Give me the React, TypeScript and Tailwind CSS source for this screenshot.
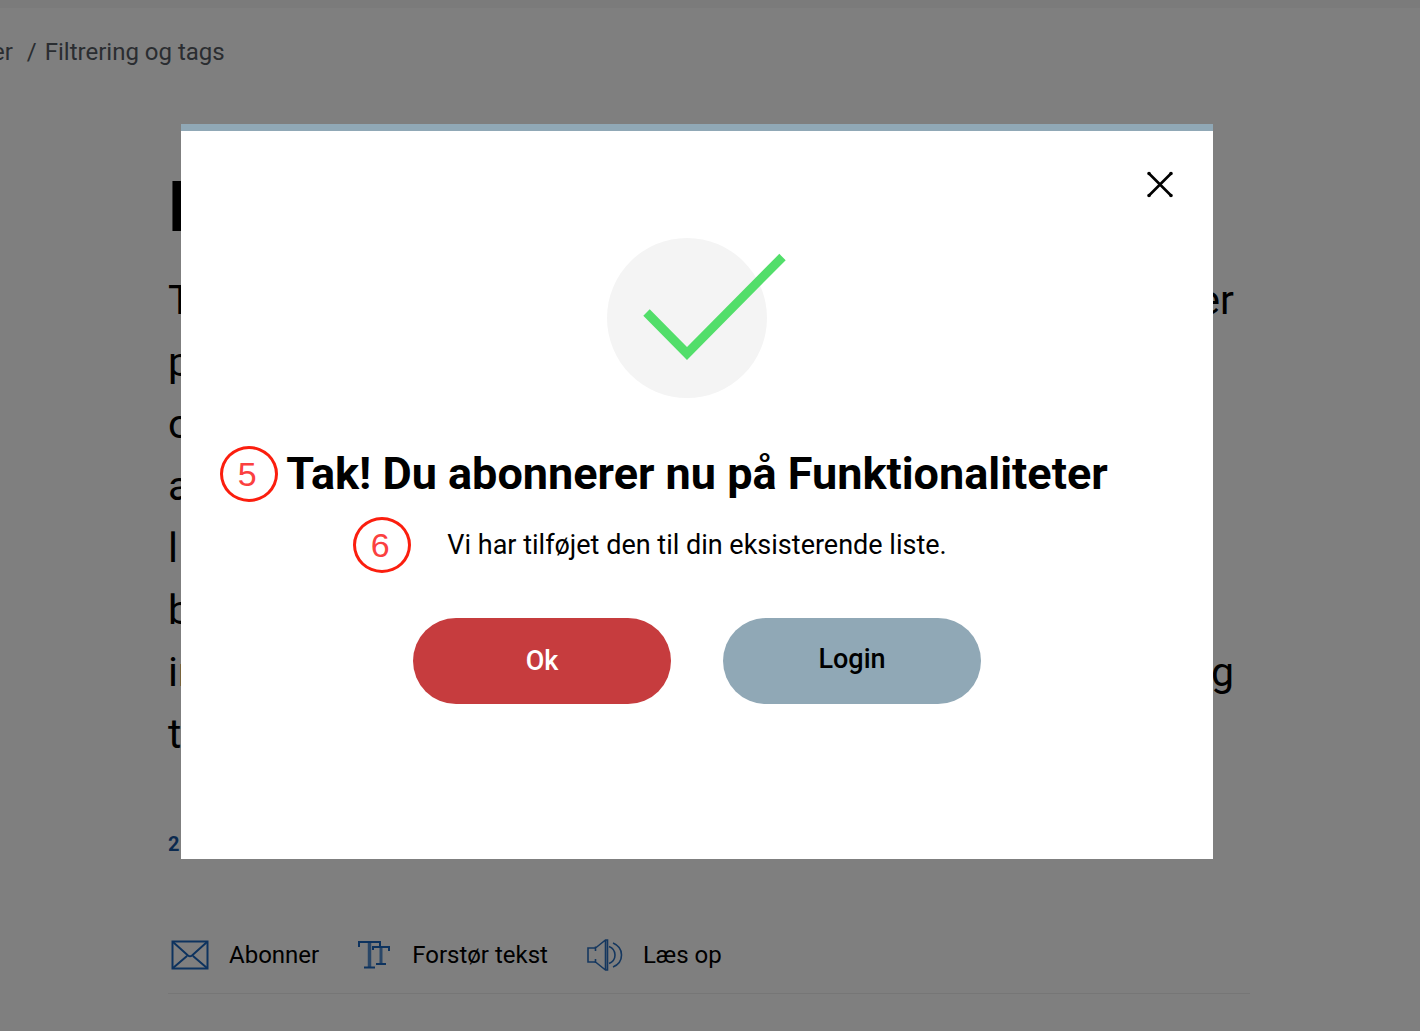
import React from "react";

// first and last visible words of every line in the intro
const introLines = [
    { start: "T", end: "er" },
    { start: "p", end: "" },
    { start: "o", end: "" },
    { start: "a", end: "" },
    { start: "l", end: "" },
    { start: "b", end: "" },
    { start: "in", end: "g" },
    { start: "t", end: "" },
];

const MailIcon = () => (
    <svg width="38" height="30" viewBox="0 0 38 30" fill="none" stroke="#1a66be" strokeWidth="2" aria-hidden="true">
        <rect x="1.5" y="1.5" width="35" height="27" />
        <path d="M2 2L17 15.500q2 1.500 4 0L36 2M2 28L16 16M36 28L22 16" />
    </svg>
);

const TextSizeIcon = () => (
    <svg width="32" height="30" viewBox="0 0 32 30" fill="none" stroke="#1a66be" aria-hidden="true">
        <path d="M1 7V2h21v4M6 27.500h11M15 10V7h16v4M18 24h10" strokeWidth="2" />
        <path d="M11.500 2v25" strokeWidth="3.500" strokeOpacity="0.750" />
        <path d="M23 7v17" strokeWidth="3" strokeOpacity="0.750" />
    </svg>
);

const SpeakerIcon = () => (
    <svg width="36" height="34" viewBox="0 0 36 34" fill="none" stroke="#2a6fbe" strokeWidth="1.600" aria-hidden="true">
        <path d="M8.500 10H1v14h7.500M8.500 8.500V13M8.500 21v4M8.500 10L18.500 2h2v30h-2L8.500 24M18.500 2v30" />
        <path d="M22 8.500q6 2.500 6 8.500t-6 8.500M26 5q8.500 3.500 8.500 12T26 29" />
    </svg>
);

const CheckMark = () => (
    <svg width="180" height="160" viewBox="0 0 180 160" fill="none" aria-hidden="true">
        <circle cx="80" cy="80" r="80" fill="#f4f4f4" />
        <path d="M39.500 74.500L80 115.500L175.500 19" stroke="#52de6a" strokeWidth="9" />
    </svg>
);

const StepBadge = ({ label, className }: { label: string; className: string }) => (
    <span
        className={`absolute right-full top-1/2 flex h-14 w-[58px] -translate-y-1/2 items-center justify-center rounded-[50%] border-[3px] border-[#fb1e0e] pr-1 font-['Liberation_Sans',sans-serif] text-[34px] font-normal leading-none text-[#fb4040] ${className}`}
    >
        {label}
    </span>
);

const tools = [
    { label: "Abonner", icon: <MailIcon />, gap: "gap-5" },
    { label: "Forstør tekst", icon: <TextSizeIcon />, gap: "gap-[22px]" },
    { label: "Læs op", icon: <SpeakerIcon />, gap: "gap-5" },
];

const Article = () => (
    <div className="min-h-screen overflow-hidden bg-white">
        <div className="h-2 bg-[#f7f7f7]" />
        <nav aria-label="Brødkrumme" className="-ml-2 mt-7 flex text-[24px] leading-8 text-[#545a62]">
            <a href="#">er</a>
            <span className="ml-[14px] mr-2">/</span>
            <a href="#">Filtrering og tags</a>
        </nav>

        <main className="ml-[168px] mr-[170px]">
            <h1 className="mt-[99px] text-[70px] font-bold leading-20">F</h1>
            <div className="mt-[22px] pr-4 text-[41px] leading-[62px]">
                {introLines.map((line, index) => (
                    <p key={index} className="flex justify-between">
                        <span>{line.start}</span>
                        <span>{line.end}</span>
                    </p>
                ))}
            </div>
            <p className="mt-[63px] text-[20px] font-bold leading-8 text-[#16549f]">2</p>

            <div className="mt-[77px] flex gap-[39px] border-b border-[#ededed] pb-5 pl-[3px]">
                {tools.map((tool) => (
                    <button key={tool.label} type="button" className={`flex h-9 items-center text-[24px] ${tool.gap}`}>
                        {tool.icon}
                        {tool.label}
                    </button>
                ))}
            </div>
        </main>
    </div>
);

const ConfirmDialog = () => (
    <div className="fixed inset-0 bg-black/50 pl-[181px] pr-[207px] pt-[124px]">
        <div
            role="dialog"
            aria-modal="true"
            aria-labelledby="dialog-title"
            className="relative flex flex-col items-center border-t-[7px] border-[#90a8b6] bg-white pb-[155px] pt-[107px]"
        >
            <button type="button" aria-label="Luk" className="absolute right-10 top-10">
                <svg width="27" height="27" viewBox="0 0 27 27" fill="none" stroke="#000" strokeWidth="2.600">
                    <path d="M3 2.500l22 22M25 2.500l-22 22" />
                    <path d="M3 2.500h.01M25 2.500h.01M3 24.500h.01M25 24.500h.01" strokeWidth="3.600" strokeLinecap="round" />
                </svg>
            </button>

            <CheckMark />

            <h2 id="dialog-title" className="relative mt-[50px] whitespace-nowrap text-[45px] font-bold leading-[52px]">
                <StepBadge label="5" className="mr-2" />
                Tak! Du abonnerer nu på Funktionaliteter
            </h2>
            <p className="relative mt-[27px] whitespace-nowrap text-[27px] leading-9">
                <StepBadge label="6" className="mr-9" />
                Vi har tilføjet den til din eksisterende liste.
            </p>

            <div className="mt-[55px] flex gap-[52px]">
                <button type="button" className="h-[86px] w-[258px] rounded-full bg-[#c63c3e] text-[27px] font-medium text-white">
                    Ok
                </button>
                <button type="button" className="h-[86px] w-[258px] rounded-full bg-[#90a8b6] pb-1 text-[27px] font-medium text-black">
                    Login
                </button>
            </div>
        </div>
    </div>
);

export default function App() {
    return (
        <div className="font-[Roboto,sans-serif] text-black">
            <Article />
            <ConfirmDialog />
        </div>
    );
}
